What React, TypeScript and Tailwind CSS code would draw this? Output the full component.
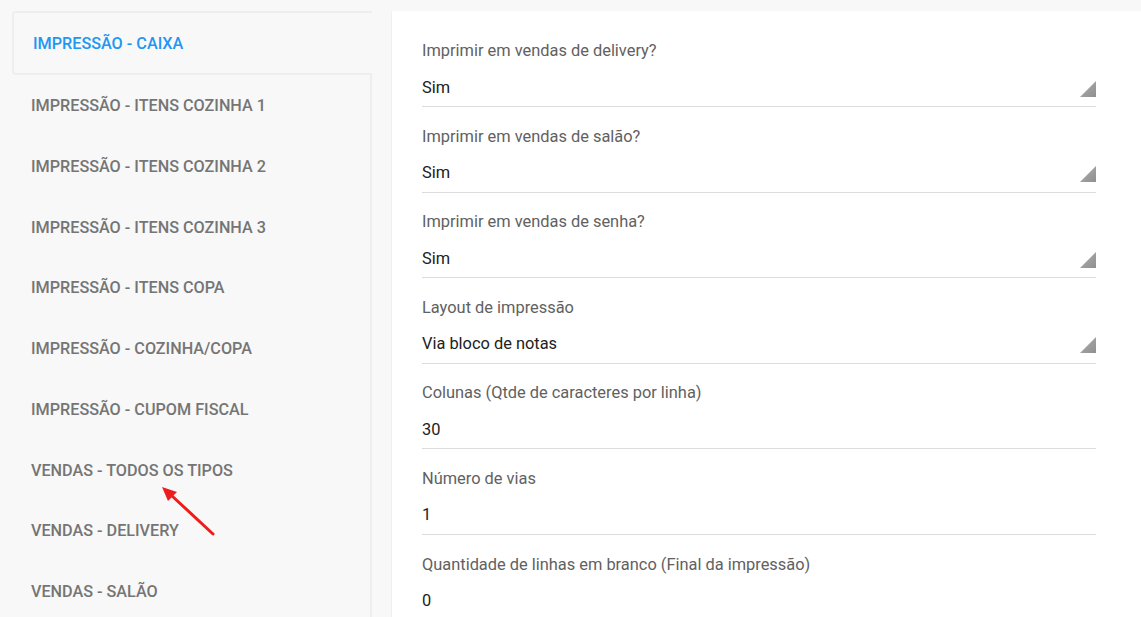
import React from "react";

const tabs = [
  "IMPRESSÃO - ITENS COZINHA 1",
  "IMPRESSÃO - ITENS COZINHA 2",
  "IMPRESSÃO - ITENS COZINHA 3",
  "IMPRESSÃO - ITENS COPA",
  "IMPRESSÃO - COZINHA/COPA",
  "IMPRESSÃO - CUPOM FISCAL",
  "VENDAS - TODOS OS TIPOS",
  "VENDAS - DELIVERY",
  "VENDAS - SALÃO",
];

const fields: { label: string; value: string; select: boolean }[] = [
  { label: "Imprimir em vendas de delivery?", value: "Sim", select: true },
  { label: "Imprimir em vendas de salão?", value: "Sim", select: true },
  { label: "Imprimir em vendas de senha?", value: "Sim", select: true },
  { label: "Layout de impressão", value: "Via bloco de notas", select: true },
  { label: "Colunas (Qtde de caracteres por linha)", value: "30", select: false },
  { label: "Número de vias", value: "1", select: false },
  { label: "Quantidade de linhas em branco (Final da impressão)", value: "0", select: false },
];

function Triangle() {
  return (
    <svg width="16" height="16" viewBox="0 0 16 16" className="shrink-0">
      <defs>
        <linearGradient id="tg" x1="0" y1="0" x2="1" y2="1">
          <stop offset="0" stopColor="#b0b0b0" />
          <stop offset="1" stopColor="#8f8f8f" />
        </linearGradient>
      </defs>
      <polygon points="16,0 16,16 0,16" fill="url(#tg)" />
    </svg>
  );
}

export default function App() {
  return (
    <div
      className="relative w-[1141px] h-[617px] overflow-hidden bg-[#f8f8f8] flex"
      style={{ fontFamily: "Roboto, 'Liberation Sans', sans-serif" }}
    >
      {/* Sidebar */}
      <div className="ml-[12px] mt-[11px] w-[360px] shrink-0 flex flex-col">
        <div className="h-[64px] shrink-0 flex items-center pl-[19px] pt-[2px] border-2 border-r-0 border-[#eeeeee] rounded-l-[4px] text-[16.2px] font-medium text-[#2196f3]">
          IMPRESSÃO - CAIXA
        </div>
        <div className="flex-1 border-r-2 border-[#eeeeee]">
          {tabs.map((t) => (
            <div
              key={t}
              className="h-[60.75px] flex items-center pl-[19px] pt-[2px] text-[16.2px] font-medium text-[#757575]"
            >
              {t}
            </div>
          ))}
        </div>
      </div>

      {/* Main panel */}
      <div className="ml-[19px] mt-[11px] w-[760px] shrink-0 bg-white border-l border-[#f0f0f0] pl-[30px] pt-[30px]">
        <div className="w-[674px] flex flex-col gap-[19.6px]">
          {fields.map((f) => (
            <div key={f.label} className="border-b border-[#dddddd] pb-[9px]">
              <div className="h-[20px] leading-[20px] text-[16.4px] text-[#616161]">{f.label}</div>
              <div className="mt-[16px] pt-[1px] h-[20px] flex items-center justify-between">
                <span className="leading-[20px] text-[16.4px] text-[#212121]">{f.value}</span>
                {f.select && (
                  <span className="mt-[2px]">
                    <Triangle />
                  </span>
                )}
              </div>
            </div>
          ))}
        </div>
      </div>

      {/* Red annotation arrow */}
      <svg className="absolute left-0 top-0 pointer-events-none" width="1141" height="617">
        <line x1="213" y1="534" x2="171" y2="495" stroke="#ee1c1c" strokeWidth="3" strokeLinecap="round" />
        <polygon points="162,487 177,492 168,501" fill="#ee1c1c" />
      </svg>
    </div>
  );
}
